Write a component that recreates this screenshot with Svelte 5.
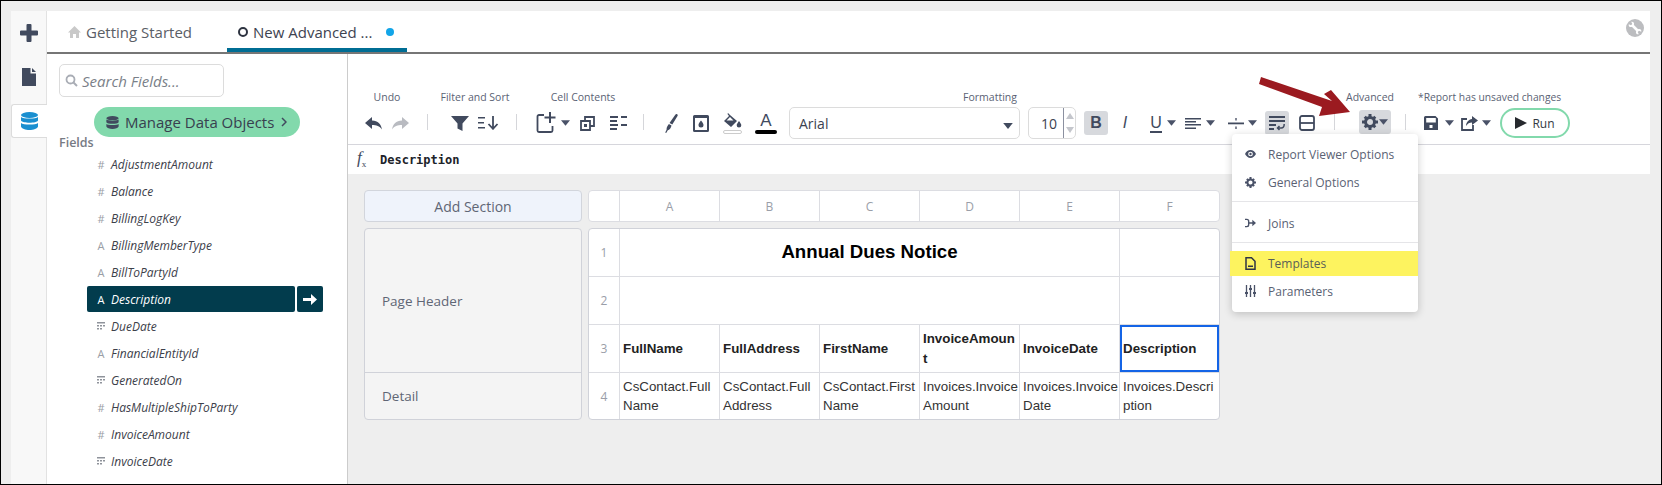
<script>
  const fields = [
    ['num', 'AdjustmentAmount'], ['num', 'Balance'], ['num', 'BillingLogKey'], ['txt', 'BillingMemberType'],
    ['txt', 'BillToPartyId'], ['txt', 'Description'], ['date', 'DueDate'], ['txt', 'FinancialEntityId'],
    ['date', 'GeneratedOn'], ['num', 'HasMultipleShipToParty'], ['num', 'InvoiceAmount'], ['date', 'InvoiceDate']
  ];
  const cols = ['A', 'B', 'C', 'D', 'E', 'F'];
  const heads = ['FullName', 'FullAddress', 'FirstName', 'InvoiceAmount', 'InvoiceDate', 'Description'];
  const vals = ['CsContact.FullName', 'CsContact.FullAddress', 'CsContact.FirstName', 'Invoices.InvoiceAmount', 'Invoices.InvoiceDate', 'Invoices.Description'];
</script>

{#snippet caret()}
  <svg class="caret" width="9" height="6" viewBox="0 0 8 5"><path d="M0 0h8L4 5z" fill="#4a5268"/></svg>
{/snippet}

<div class="frame">
  <div class="app">
    <nav class="rail">
      <div class="railitem">
        <svg width="18" height="18" viewBox="0 0 18 18"><path d="M6.500 1a1 1 0 0 1 1-1h3a1 1 0 0 1 1 1v5.500H17a1 1 0 0 1 1 1v3a1 1 0 0 1-1 1h-5.500V17a1 1 0 0 1-1 1h-3a1 1 0 0 1-1-1v-5.500H1a1 1 0 0 1-1-1v-3a1 1 0 0 1 1-1h5.500z" fill="#414a5e"/></svg>
      </div>
      <div class="railitem doc">
        <svg width="14" height="18" viewBox="0 0 14 18"><path d="M0 0h8.500v5.500H14V18H0zM10 0l4 4h-4z" fill="#414a5e"/></svg>
      </div>
      <div class="railitem active">
        <svg width="17" height="18" viewBox="0 0 17 18"><g fill="#1a8fd0"><ellipse cx="8.500" cy="3" rx="8.500" ry="3"/><path d="M0 5c2 2 15 2 17 0v3.500c-1 3-16 3-17 0zM0 11c2 2 15 2 17 0v3.500c-1 4.600-16 4.600-17 0z"/></g></svg>
      </div>
    </nav>

    <div class="main">
      <header class="tabs">
        <div class="tab">
          <svg width="13" height="12" viewBox="0 0 13 12"><path d="M6.500 0 13 6.500h-2V12H8V8H5v4H2V6.500H0z" fill="#c9c9c9"/></svg>
          <span>Getting Started</span>
        </div>
        <div class="tab current">
          <i class="ring"></i>
          <span>New Advanced ...</span>
          <i class="dot"></i>
        </div>
        <svg class="wrench" width="18" height="18" viewBox="0 0 18 18"><circle cx="9" cy="9" r="9" fill="#bcbdc0"/><path d="M6 6l6 6" stroke="#fff" stroke-width="2.600"/><path d="M2.800 5.200 5 6.300l1.300-1.300L5.200 2.800C7 2.200 8.500 3.600 8 5.600L5.600 8C3.600 8.500 2.200 7 2.800 5.200zM15.200 12.800 13 11.700l-1.300 1.300 1.100 2.200c-1.800.6-3.300-.8-2.800-2.800l2.400-2.400c2-.5 3.400 1 2.800 2.800z" fill="#fff"/></svg>
      </header>

      <div class="body">
        <aside class="side">
          <div class="search">
            <svg width="13" height="13" viewBox="0 0 13 13"><circle cx="5.500" cy="5.500" r="4" fill="none" stroke="#a9adb5" stroke-width="1.800"/><path d="m8.500 8.500 3.500 3.500" stroke="#a9adb5" stroke-width="2"/></svg>
            <span>Search Fields...</span>
          </div>
          <div class="pill">
            <svg width="13" height="13" viewBox="0 0 17 18"><g fill="#414a5e"><ellipse cx="8.500" cy="3" rx="8.500" ry="3"/><path d="M0 5c2 2 15 2 17 0v3.500c-1 3-16 3-17 0zM0 11c2 2 15 2 17 0v3.500c-1 4.600-16 4.600-17 0z"/></g></svg>
            <span>Manage Data Objects</span>
            <svg width="6" height="10" viewBox="0 0 6 10"><path d="m1 1 4 4-4 4" fill="none" stroke="#414a5e" stroke-width="1.500"/></svg>
          </div>
          <div class="fieldshead">Fields</div>
          <ul class="fields">
            {#each fields as [kind, name]}
              <li class:sel={name === 'Description'}>
                <div class="fname">
                  {#if kind === 'date'}
                    <svg class="ftype" width="8" height="8" viewBox="0 0 8 8"><path d="M0 0h8v1.500H0zM0 3h2v1.500H0zM3 3h2v1.500H3zM6 3h2v1.500H6zM0 6h2v1.500H0zM3 6h2v1.500H3z" fill="#8f939b"/></svg>
                  {:else}
                    <span class="ftype glyph">{kind === 'num' ? '#' : 'A'}</span>
                  {/if}
                  <span>{name}</span>
                </div>
                {#if name === 'Description'}
                  <div class="go">
                    <svg width="14" height="11" viewBox="0 0 14 11"><path d="M0 4h8V0l6 5.500L8 11V7H0z" fill="#fff"/></svg>
                  </div>
                {/if}
              </li>
            {/each}
          </ul>
        </aside>

        <section class="panel">
          <div class="toolbar">
            <div class="group g-undo">
              <div class="lbl">Undo</div>
              <div class="row">
                <svg width="17" height="13" viewBox="0 0 17 13"><path d="M7 0v3.500c6 0 9 3.500 10 9-2.500-3.500-5.500-4.500-10-4.500v4L0 6z" fill="#414a5e"/></svg>
                <svg class="m10" width="17" height="13" viewBox="0 0 17 13"><path d="M10 0v3.500c-6 0-9 3.500-10 9 2.500-3.500 5.500-4.500 10-4.500v4l7-6z" fill="#b9bbc1"/></svg>
              </div>
            </div>
            <i class="sep s1"></i>
            <div class="group g-filter">
              <div class="lbl">Filter and Sort</div>
              <div class="row">
                <svg width="18" height="15" viewBox="0 0 18 15"><path d="M0 0h18l-6.500 7.500V15l-5-2.500V7.500z" fill="#414a5e"/></svg>
                <svg class="m9" width="21" height="14" viewBox="0 0 21 14"><path d="M0 1h7v1.500H0zM0 6h6v1.500H0zM0 11h7v1.500H0z" fill="#414a5e"/><path d="M15 0v12M10.500 8l4.500 4.800L19.500 8" fill="none" stroke="#414a5e" stroke-width="1.800"/></svg>
              </div>
            </div>
            <i class="sep s2"></i>
            <div class="group g-cell">
              <div class="lbl">Cell Contents</div>
              <div class="row start">
                <svg width="24" height="22" viewBox="0 0 24 22"><path d="M8 3H3a1.500 1.500 0 0 0-1.500 1.500v14A1.500 1.500 0 0 0 3 20h12a1.500 1.500 0 0 0 1.500-1.500V14" fill="none" stroke="#414a5e" stroke-width="1.800"/><path d="M14 0v11M8.500 5.500h11" stroke="#414a5e" stroke-width="2"/></svg>
                {@render caret()}
                <svg class="m10" width="15" height="15" viewBox="0 0 15 15"><path d="M5 5V1h9v9h-4" fill="none" stroke="#414a5e" stroke-width="1.800"/><path d="M1 5h9v9H1z" fill="none" stroke="#414a5e" stroke-width="1.800"/><path d="M4 8h3v3H4z" fill="#414a5e"/></svg>
                <svg class="m15" width="17" height="14" viewBox="0 0 17 14"><path d="M0 0h8v2H0zM11 0h6v2h-6zM0 4h7v2H0zM0 8h8v2H0zM11 8h6v2h-6zM0 12h7v2H0z" fill="#414a5e"/></svg>
              </div>
            </div>
            <i class="sep s3"></i>
            <div class="group g-format">
              <div class="lbl">Formatting</div>
              <div class="row start">
                <svg class="i-brush" width="13" height="19" viewBox="0 0 13 19"><path d="M12.200.3c.6.4.7 1 .3 1.600L7.300 10.500 4.500 8.900 10.300.8c.5-.7 1.200-.9 1.900-.5zM3.900 10l2.600 1.500C6 14 4.500 16 2.800 16.300L1.200 19l-1-.6 1.400-2.600C1.300 14 2.500 11.500 3.900 10z" fill="#414a5e"/></svg>
                <svg class="i-doc" width="16" height="17" viewBox="0 0 16 17"><path d="M0 1.500A1.500 1.500 0 0 1 1.500 0h13A1.500 1.500 0 0 1 16 1.500v14a1.500 1.500 0 0 1-1.500 1.500h-13A1.500 1.500 0 0 1 0 15.500zM2 3v12h12V3z" fill="#414a5e" fill-rule="evenodd"/><path d="M8 5.500c1.500 2 2.500 3.200 2.500 4.500a2.500 2.500 0 0 1-5 0c0-1.300 1-2.500 2.500-4.500z" fill="#414a5e"/></svg>
                <span class="i-fill">
                  <svg width="19" height="15" viewBox="0 0 19 15"><path d="M5 0 7 2 14 8 8 14 1 8 6 3 4.500 1zM7 4 3.500 7.500h7z" fill="#414a5e" fill-rule="evenodd"/><path d="M16 8c1.300 2 2.300 3 2.300 4.200a2.300 2.300 0 0 1-4.600 0C13.700 11 14.700 10 16 8z" fill="#414a5e"/></svg>
                  <i class="swatch light"></i>
                </span>
                <span class="i-color">
                  <b>A</b>
                  <i class="swatch dark"></i>
                </span>
                <div class="font">
                  <span>Arial</span>
                  <svg width="10" height="6" viewBox="0 0 8 5"><path d="M0 0h8L4 5z" fill="#414a5e"/></svg>
                </div>
                <div class="size">
                  <span>10</span>
                  <div class="spin">
                    <svg width="8" height="6" viewBox="0 0 8 6"><path d="M4 0l4 6H0z" fill="#c4c6cc"/></svg>
                    <svg width="8" height="6" viewBox="0 0 8 6"><path d="M0 0h8L4 6z" fill="#c4c6cc"/></svg>
                  </div>
                </div>
                <b class="t-b">B</b>
                <i class="t-i">I</i>
                <span class="t-u">U</span>
                {@render caret()}
                <svg class="i-align" width="16" height="11" viewBox="0 0 16 11"><path d="M0 0h16v1.600H0zM0 3h11v1.600H0zM0 6h16v1.600H0zM0 9.400h11V11H0z" fill="#414a5e"/></svg>
                {@render caret()}
                <svg class="i-space" width="16" height="11" viewBox="0 0 16 11"><path d="M0 4.500h16v1.800H0z" fill="#414a5e"/><path d="M7 0h2v2.500H7zM7 8.500h2V11H7z" fill="#818695"/></svg>
                {@render caret()}
                <span class="i-wrap">
                  <svg width="16" height="16" viewBox="0 0 16 16"><path d="M0 1h16v2H0zM0 5h16v2H0zM0 9h7v2H0zM0 13h5v2H0z" fill="#414a5e"/><path d="M15.200 9c0 2.500-1 4-3 4H8.500M10.500 11 8.500 13l2 2" fill="none" stroke="#414a5e" stroke-width="1.500"/></svg>
                </span>
                <svg class="i-split" width="16" height="16" viewBox="0 0 16 16"><rect x="1" y="1" width="14" height="14" rx="2" fill="none" stroke="#414a5e" stroke-width="1.800"/><path d="M1 8h14" stroke="#414a5e" stroke-width="1.800"/></svg>
              </div>
            </div>
            <i class="sep s4"></i>
            <div class="group g-adv">
              <div class="lbl">Advanced</div>
              <div class="row end">
                <div class="gear">
                  <svg width="16" height="16" viewBox="0 0 16 16"><circle cx="8" cy="8" r="4.500" fill="none" stroke="#414a5e" stroke-width="3"/><path d="M6.500 0h3v3h-3zM6.500 13h3v3h-3zM0 6.500h3v3H0zM13 6.500h3v3h-3zM1.700 3.800 3.800 1.700l2 2-2.100 2.100zM10.200 12.300l2.100-2.100 2 2-2.100 2.100zM12.300 1.700l2 2.100-2 2-2.100-2.100zM3.700 10.200l2.100 2.100-2 2-2.100-2.100z" fill="#414a5e"/></svg>
                  {@render caret()}
                </div>
              </div>
            </div>
            <i class="sep s5"></i>
            <div class="group g-report">
              <div class="lbl">*Report has unsaved changes</div>
              <div class="row start">
                <svg class="i-save" width="14" height="14" viewBox="0 0 14 14"><path d="M0 1.500A1.500 1.500 0 0 1 1.500 0h10L14 2.500v11.500H0zM2.200 2v4.500h9.600V2zM5.500 9v3h3V9z" fill="#414a5e" fill-rule="evenodd"/></svg>
                <span class="m6">{@render caret()}</span>
                <svg class="i-share" width="17" height="15" viewBox="0 0 17 15"><path d="M6 3H1v11h11V9" fill="none" stroke="#414a5e" stroke-width="1.800"/><path d="M11 0l6 4.500L11 9V6.500C8.500 6.500 6.500 7.500 5 10c.3-4 2.500-6.500 6-7z" fill="#414a5e"/></svg>
                <span class="m3">{@render caret()}</span>
                <div class="run">
                  <svg width="12" height="12" viewBox="0 0 12 12"><path d="M0 0l12 6-12 6z" fill="#27292e"/></svg>
                  <span>Run</span>
                </div>
              </div>
            </div>
          </div>

          <div class="formula">
            <span class="fx">f<sub>x</sub></span>
            <span class="ftext">Description</span>
          </div>

          <div class="canvas">
            <div class="sheet">
              <div class="addsec">Add Section</div>
              <div class="colhead">
                <div class="corner"></div>
                {#each cols as c}<div>{c}</div>{/each}
              </div>
              <div class="sections">
                <div class="sec pagehead">Page Header</div>
                <div class="sec">Detail</div>
              </div>
              <div class="grid">
                <div class="rn r1">1</div>
                <div class="c title">Annual Dues Notice</div>
                <div class="c r1"></div>
                <div class="rn r1">2</div>
                <div class="c wide"></div>
                <div class="c r1"></div>
                <div class="rn r1">3</div>
                {#each heads as h}
                  <div class="c hd r1" class:picked={h === 'Description'}><span>{h}</span></div>
                {/each}
                <div class="rn">4</div>
                {#each vals as v}
                  <div class="c val"><span>{v}</span></div>
                {/each}
              </div>
            </div>
          </div>
        </section>
      </div>
    </div>
  </div>

  <ul class="menu">
    <li>
      <svg width="11" height="8" viewBox="0 0 14 10"><path d="M7 0c3 0 5.500 2 7 5-1.500 3-4 5-7 5S1.500 8 0 5c1.500-3 4-5 7-5zm0 2a3 3 0 1 0 0 6 3 3 0 0 0 0-6zm0 1.500a1.500 1.500 0 1 1 0 3 1.500 1.500 0 0 1 0-3z" fill="#4a5268" fill-rule="evenodd"/></svg>
      <span>Report Viewer Options</span>
    </li>
    <li>
      <svg width="11" height="11" viewBox="0 0 16 16"><circle cx="8" cy="8" r="4.500" fill="none" stroke="#4a5268" stroke-width="3"/><path d="M6.500 0h3v3h-3zM6.500 13h3v3h-3zM0 6.500h3v3H0zM13 6.500h3v3h-3zM1.700 3.800 3.800 1.700l2 2-2.100 2.100zM10.200 12.300l2.100-2.100 2 2-2.100 2.100zM12.300 1.700l2 2.100-2 2-2.100-2.100zM3.700 10.200l2.100 2.100-2 2-2.100-2.100z" fill="#4a5268"/></svg>
      <span>General Options</span>
    </li>
    <li class="div joins">
      <svg width="11" height="10" viewBox="0 0 12 10"><path d="M0 1h2c1.500 0 2 1 2 2v4c0 1-.5 2-2 2H0" fill="none" stroke="#4a5268" stroke-width="1.500"/><path d="M4 4.200h4V1.500L12 5 8 8.500V5.800H4z" fill="#4a5268"/></svg>
      <span>Joins</span>
    </li>
    <li class="div2 tpl">
      <svg width="11" height="13" viewBox="0 0 11 13"><path d="M1 .8h5.500L10 4.300v7.900H1z" fill="none" stroke="#2f3544" stroke-width="1.500"/><path d="M3 8.500h5V10H3z" fill="#2f3544"/></svg>
      <span>Templates</span>
    </li>
    <li>
      <svg width="11" height="12" viewBox="0 0 11 12"><path d="M1.500 0v12M5.500 0v12M9.500 0v12" stroke="#4a5268" stroke-width="1.300"/><path d="M0 7h3v2H0zM4 3h3v2H4zM8 7h3v2H8z" fill="#4a5268"/></svg>
      <span>Parameters</span>
    </li>
  </ul>

  <svg class="pointer" width="93" height="41" viewBox="1259 76 93 41"><path d="M1261 77 1332 101 1324 94 1331 90 1350 112 1319 116 1322 107 1259 84z" fill="#9b1a20"/></svg>
</div>

<style>
  :global(body) { margin: 0; background: #eee; }
  * { box-sizing: border-box; }
  ul { list-style: none; margin: 0; padding: 0; }
  svg { display: block; flex: none; }
  i { font-style: normal; }

  .frame {
    position: relative;
    width: 1662px;
    height: 485px;
    padding: 10px 10px 0;
    border: 1px solid #000;
    background: #eee;
    font-family: "Open Sans", sans-serif;
    color: #5a6274;
    overflow: hidden;
  }
  .app { display: flex; width: 1639px; height: 473px; background: #fff; }

  .rail { width: 36px; background: #f8f8f8; border-right: 1px solid #e2e2e2; display: flex; flex-direction: column; }
  .railitem { height: 44px; display: flex; align-items: center; justify-content: center; }
  .railitem.active {
    width: 36px; height: 34px; margin-top: 5px;
    background: #fff; border: 1px solid #dcdcdc; border-right: 0; border-radius: 3px 0 0 3px;
  }

  .main { flex: 1; display: flex; flex-direction: column; min-width: 0; }
  .tabs { height: 43px; border-bottom: 2px solid #767676; display: flex; position: relative; }
  .tab { display: flex; align-items: center; height: 41px; font-size: 15px; color: #5a5e66; }
  .tab:first-child { padding-left: 21px; width: 180px; gap: 5px; }
  .tab.current { width: 180px; padding-left: 11px; border-bottom: 4px solid #006d94; color: #3d4350; gap: 5px; padding-top: 4px; }
  .ring { width: 10px; height: 10px; border: 2px solid #2d3340; border-radius: 50%; }
  .dot { width: 8px; height: 8px; border-radius: 50%; background: #12a5e8; margin-left: 9px; }
  .wrench { position: absolute; left: 1579px; top: 8px; }

  .body { flex: 1; display: flex; min-height: 0; }
  .side { width: 301px; border-right: 1px solid #ccc; padding: 10px 0 0 12px; }
  .search {
    width: 165px; height: 33px; border: 1px solid #dcdcdc; border-radius: 5px;
    display: flex; align-items: center; gap: 4px; padding-left: 5px;
    font-style: italic; font-size: 15px; color: #7a7f88;
  }
  .pill {
    margin: 10px 0 0 35px; width: 206px; height: 30px; border-radius: 15px; background: #82d9ac;
    display: flex; align-items: center; gap: 6px; padding-left: 12px;
    font-size: 15px; color: #38404f;
  }
  .pill span { margin-right: 1px; }
  .fieldshead { font-size: 12.500px; font-weight: 600; color: #777b84; line-height: 18px; margin-top: -3px; }
  .fields { margin-top: -1px; margin-left: 28px; }
  .fields li { display: flex; gap: 2px; height: 27px; }
  .fname {
    width: 208px; height: 26px; padding-left: 10px; display: flex; align-items: center; gap: 6px;
    font-size: 12px; font-style: italic; color: #3c404a; border-radius: 2px;
  }
  .ftype { width: 8px; flex: none; }
  .glyph { font-style: normal; font-size: 11px; color: #9a9ea6; line-height: 1; text-align: center; }
  .sel .fname { background: #023c4d; color: #fff; }
  .sel .glyph { color: #fff; }
  .go { width: 26px; height: 26px; background: #023c4d; border-radius: 2px; display: flex; align-items: center; justify-content: center; }

  .panel { flex: 1; display: flex; flex-direction: column; min-width: 0; }
  .toolbar { height: 91px; border-bottom: 1px solid #d6d6dc; padding: 35px 0 0 12px; display: flex; align-items: flex-start; }
  .group { flex: none; }
  .lbl { height: 18px; font-size: 10.500px; line-height: 16px; text-align: center; color: #5a6274; white-space: nowrap; }
  .row { height: 32px; display: flex; align-items: center; justify-content: center; }
  .row.start { justify-content: flex-start; }
  .row.end { justify-content: flex-end; }
  .sep { flex: none; width: 1px; height: 16px; background: #d5d6da; margin-top: 25px; }
  .g-undo { width: 54px; }
  .s1 { margin-left: 13px; }
  .g-filter { width: 70px; margin-left: 12px; }
  .s2 { margin-left: 6px; }
  .g-cell { width: 102px; margin-left: 15px; }
  .g-cell .row { padding-left: 4px; }
  .s3 { margin-left: 9px; }
  .g-format { width: 670px; margin-left: 11px; }
  .g-format .row { padding-left: 10px; }
  .s4 { margin-left: 9px; }
  .g-adv { width: 50px; margin-left: 10px; }
  .s5 { margin-left: 10px; }
  .g-report { width: 152px; margin-left: 12px; }
  .g-report .lbl { text-align: left; font-size: 10.300px; }
  .g-report .row { padding-left: 6px; }
  .m10 { margin-left: 10px; }
  .m9 { margin-left: 9px; }
  .m15 { margin-left: 15px; }
  .m6 { margin-left: 6px; }
  .m3 { margin-left: 3px; }
  .caret { margin-left: 1px; }

  .i-doc { margin-left: 15px; }
  .i-fill { margin-left: 14px; width: 19px; display: flex; flex-direction: column; gap: 2px; }
  .i-color { margin-left: 13px; width: 22px; display: flex; flex-direction: column; align-items: center; color: #414a5e; }
  .i-color b { font-weight: 400; font-size: 17px; line-height: 18px; font-family: "Liberation Sans", sans-serif; }
  .swatch { display: block; height: 4px; border-radius: 2px; width: 100%; }
  .swatch.light { background: #fff; border: 1px solid #ccc; }
  .swatch.dark { background: #000; height: 4px; }
  .font {
    margin-left: 12px; width: 231px; height: 32px; border: 1px solid #dcdcdc; border-radius: 5px;
    display: flex; align-items: center; justify-content: space-between; padding: 0 6px 0 9px;
    font-size: 14px; color: #3c4250;
  }
  .font svg { margin-top: 6px; }
  .size {
    margin-left: 8px; width: 48px; height: 32px; border: 1px solid #dcdcdc; border-radius: 5px;
    display: flex; align-items: center; justify-content: flex-end; font-size: 14px; color: #3c4250;
  }
  .spin { width: 12px; height: 30px; margin-left: 6px; border-left: 1px solid #8b90a0; display: flex; flex-direction: column; align-items: center; justify-content: space-between; padding: 5px 0; }
  .t-b {
    margin-left: 8px; width: 24px; height: 24px; background: #d7d9dd; border-radius: 3px;
    display: flex; align-items: center; justify-content: center;
    font-family: "Liberation Sans", sans-serif; font-size: 16px; color: #414a5e;
  }
  .t-i { margin-left: 12px; width: 10px; font-style: italic; font-family: "Liberation Sans", sans-serif; font-size: 16px; color: #414a5e; text-align: center; }
  .t-u { margin-left: 20px; width: 12px; font-family: "Liberation Sans", sans-serif; font-size: 16px; line-height: 17px; border-bottom: 2px solid #414a5e; color: #414a5e; text-align: center; margin-right: 4px; }
  .i-align { margin-left: 9px; margin-right: 4px; }
  .i-space { margin-left: 13px; margin-right: 3px; }
  .i-wrap { margin-left: 8px; width: 24px; height: 24px; background: #d7d9dd; border-radius: 3px; display: flex; align-items: center; justify-content: center; }
  .i-split { margin-left: 10px; }
  .i-share { margin-left: 7px; }
  .gear { width: 32px; height: 24px; background: #d7d9dd; border-radius: 3px; display: flex; align-items: center; justify-content: center; margin-right: 4px; margin-top: -2px; gap: 0; }
  .run {
    margin-left: 9px; width: 71px; height: 30px; border: 2px solid #82d9ac; border-radius: 15px;
    display: flex; align-items: center; justify-content: center; gap: 5px; font-size: 12px; color: #33383f;
  }

  .formula { height: 29px; display: flex; align-items: center; padding-left: 9px; gap: 9px; background: #fff; }
  .fx { font-family: "Liberation Serif", serif; font-style: italic; font-size: 17px; color: #414a5e; line-height: 1; width: 14px; }
  .fx sub { font-size: 9px; font-style: normal; }
  .ftext { font-family: "DejaVu Sans Mono", monospace; font-weight: 700; font-size: 12px; color: #20232a; }

  .canvas { flex: 1; background: #eee; padding: 16px 0 0 16px; }
  .sheet { display: grid; grid-template-columns: 218px 632px; grid-template-rows: 32px 192px; column-gap: 6px; row-gap: 6px; }
  .addsec {
    background: #eff3fb; border: 1px solid #d2d5dc; border-radius: 4px;
    display: flex; align-items: center; justify-content: center; font-size: 14px; color: #5f6675;
  }
  .colhead {
    display: grid; grid-template-columns: 30px repeat(6, 100px); background: #fff;
    border: 1px solid #dcdde2; border-radius: 4px; font-size: 12px; color: #9a9ea8;
  }
  .colhead > div { display: flex; align-items: center; justify-content: center; border-left: 1px solid #dcdde2; }
  .colhead > .corner { border-left: 0; }
  .sections { border: 1px solid #d0d2d9; border-radius: 4px; background: #f4f4f4; display: flex; flex-direction: column; }
  .sec { flex: 1; display: flex; align-items: center; padding-left: 17px; font-size: 13.500px; color: #5f6675; }
  .sec.pagehead { flex: none; height: 144px; border-bottom: 1px solid #d0d2d9; }
  .grid {
    display: grid; grid-template-columns: 30px repeat(6, 100px); grid-template-rows: 48px 48px 48px 46px;
    background: #fff; border: 1px solid #d0d2d9; border-radius: 4px;
    font-family: "Liberation Sans", sans-serif;
  }
  .rn { display: flex; align-items: center; justify-content: center; font-family: "Open Sans", sans-serif; font-size: 12px; color: #9a9ea8; }
  .r1 { border-bottom: 1px solid #dcdde2; }
  .c { border-left: 1px solid #dcdde2; min-width: 0; display: flex; align-items: center; }
  .title { grid-column: span 5; justify-content: center; font-size: 18.670px; font-weight: 700; color: #000; border-bottom: 1px solid #dcdde2; padding-bottom: 2px; }
  .wide { grid-column: span 5; border-bottom: 1px solid #dcdde2; }
  .hd { font-size: 13.330px; font-weight: 700; line-height: 20px; color: #222; padding-left: 3px; }
  .hd span, .val span { word-break: break-all; }
  .hd.picked { box-shadow: inset 0 0 0 2px #1464e6; padding-left: 3px; }
  .val { font-size: 13.330px; line-height: 19px; color: #333; padding-left: 3px; }

  .menu {
    position: absolute; left: 1231px; top: 133px; width: 186px; height: 178px;
    background: #fff; border-radius: 4px; box-shadow: 0 2px 9px rgba(0,0,0,.2);
    padding-top: 6px; font-size: 12px; color: #5a6274;
  }
  .menu li { height: 28px; display: flex; align-items: center; padding-left: 13px; }
  .menu li svg { margin-right: 12px; }
  .menu .div { margin-top: 13px; position: relative; margin-bottom: -1px; }
  .menu .div2 { margin-top: 15px; position: relative; }
  .menu .div::before { content: ""; position: absolute; left: 0; right: 0; top: -8px; border-top: 1px solid #e5e5e8; }
  .menu .div2::before { content: ""; position: absolute; left: 2px; right: 0; top: -9px; border-top: 1px solid #e5e5e8; }
  .menu .tpl { height: 25px; background: #fdf35f; margin-left: -2px; padding-left: 15px; color: #5a5f58; margin-bottom: 1px; }

  .pointer { position: absolute; left: 1258px; top: 75px; }
</style>
